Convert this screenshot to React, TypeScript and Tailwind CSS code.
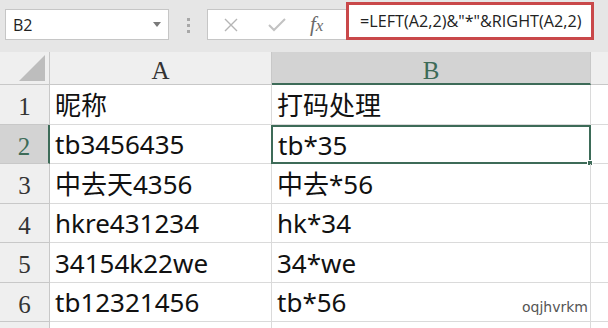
import React from "react";

const rows = [
  ["昵称", "打码处理"],
  ["tb3456435", "tb*35"],
  ["中去天4356", "中去*56"],
  ["hkre431234", "hk*34"],
  ["34154k22we", "34*we"],
  ["tb12321456", "tb*56"],
];

const cellFont = { fontFamily: '"Noto Sans", "Noto Sans CJK SC", sans-serif' };
const serif = { fontFamily: '"Liberation Serif", serif' };

export default function App() {
  return (
    <div className="h-[328px] w-[608px] overflow-hidden bg-white">
      {/* Formula bar */}
      <div className="flex h-[52px] items-start bg-[#e6e6e6] pt-[9px]">
        <div className="ml-[5px] flex h-[31px] w-[164px] items-center justify-between border border-[#c6c6c6] bg-white pl-[7px] pr-[7px]">
          <span className="text-[16px] text-[#222]" style={{ fontFamily: '"Open Sans", sans-serif' }}>
            B2
          </span>
          <svg width="8" height="5" viewBox="0 0 8 5">
            <path d="M0 0h8L4 5z" fill="#7a7a7a" />
          </svg>
        </div>
        <div className="flex w-[38px] flex-col items-center gap-[3px] pt-[9px]">
          <span className="h-[3px] w-[3px] bg-[#a8a8a8]" />
          <span className="h-[3px] w-[3px] bg-[#a8a8a8]" />
          <span className="h-[3px] w-[3px] bg-[#a8a8a8]" />
        </div>
        <div className="flex h-[31px] w-[139px] items-center border border-r-0 border-[#c6c6c6] bg-white">
          <svg className="ml-[15px]" width="16" height="16" viewBox="0 0 16 16">
            <path d="M2 2l12 12M14 2L2 14" stroke="#b5b5b5" strokeWidth="1.4" />
          </svg>
          <svg className="ml-[29px]" width="18" height="14" viewBox="0 0 18 14">
            <path d="M1 7l5 5L17 1" stroke="#c2c2c2" strokeWidth="2" fill="none" />
          </svg>
          <span
            className="ml-[24px] text-[21px] italic text-[#6a6a6a]"
            style={{ fontFamily: '"Liberation Serif", serif' }}
          >
            f<span className="text-[17px]">x</span>
          </span>
        </div>
        <div className="-mt-[7px] flex h-[38px] w-[248px] items-center border-[3px] border-[#c9484a] bg-white pl-[11px]">
          <span className="text-[16.2px] text-[#222]" style={{ fontFamily: '"Open Sans", sans-serif' }}>
            =LEFT(A2,2)&amp;"*"&amp;RIGHT(A2,2)
          </span>
        </div>
        <div className="-mt-[9px] h-[52px] flex-1 bg-[#e6e6e6]" />
      </div>

      {/* Grid */}
      <div className="grid grid-cols-[50px_222px_319px_17px] grid-rows-[33px_repeat(6,39.5px)_10px]">
        {/* header row */}
        <div className="relative border-b border-r border-[#c8c8c8] bg-[#efefef]">
          <svg className="absolute bottom-[3px] right-[4px]" width="26" height="26" viewBox="0 0 26 26">
            <path d="M26 0V26H0z" fill="#bdbdbd" />
          </svg>
        </div>
        <div
          className="flex items-center justify-center border-b border-r border-[#c8c8c8] bg-[#efefef] pt-[6px] text-[25px] text-[#333]"
          style={serif}
        >
          A
        </div>
        <div
          className="flex items-center justify-center border-b-2 border-r border-b-[#3d6b58] border-r-[#c8c8c8] bg-[#d3d3d3] pt-[6px] text-[25px] text-[#3d6b58]"
          style={serif}
        >
          B
        </div>
        <div className="border-b border-[#c8c8c8] bg-[#efefef]" />

        {rows.map((r, i) => {
          const sel = i === 1;
          return (
            <React.Fragment key={i}>
              <div
                className={
                  "flex items-center justify-center border-b border-r pt-[5px] text-[25px] " +
                  (sel
                    ? "border-b-[#c8c8c8] border-r-2 border-r-[#3d6b58] bg-[#d3d3d3] text-[#3d6b58]"
                    : "border-[#c8c8c8] bg-[#efefef] text-[#333]")
                }
                style={serif}
              >
                {i + 1}
              </div>
              <div
                className="flex items-center border-b border-r border-[#dadada] pl-[5px] pt-[2px] text-[26px] text-[#111]"
                style={cellFont}
              >
                {r[0]}
              </div>
              <div
                className={
                  "relative flex items-center pl-[5px] pt-[2px] text-[26px] text-[#111] " +
                  (sel ? "-ml-px border-2 border-[#3d6b58]" : "border-b border-r border-[#dadada]")
                }
                style={cellFont}
              >
                {r[1]}
                {sel && <span className="absolute -bottom-[4px] -right-[4px] h-[6px] w-[6px] border border-white bg-[#3d6b58]" />}
                {i === 5 && (
                  <span
                    className="absolute bottom-[3px] right-[2px] text-[14px] text-[#555]"
                    style={{ fontFamily: '"DejaVu Sans", sans-serif' }}
                  >
                    oqjhvrkm
                  </span>
                )}
              </div>
              <div className="border-b border-[#dadada]" />
            </React.Fragment>
          );
        })}
        <div className="border-r border-[#c8c8c8] bg-[#efefef]" />
        <div className="border-r border-[#dadada]" />
        <div className="border-r border-[#dadada]" />
        <div />
      </div>
    </div>
  );
}
